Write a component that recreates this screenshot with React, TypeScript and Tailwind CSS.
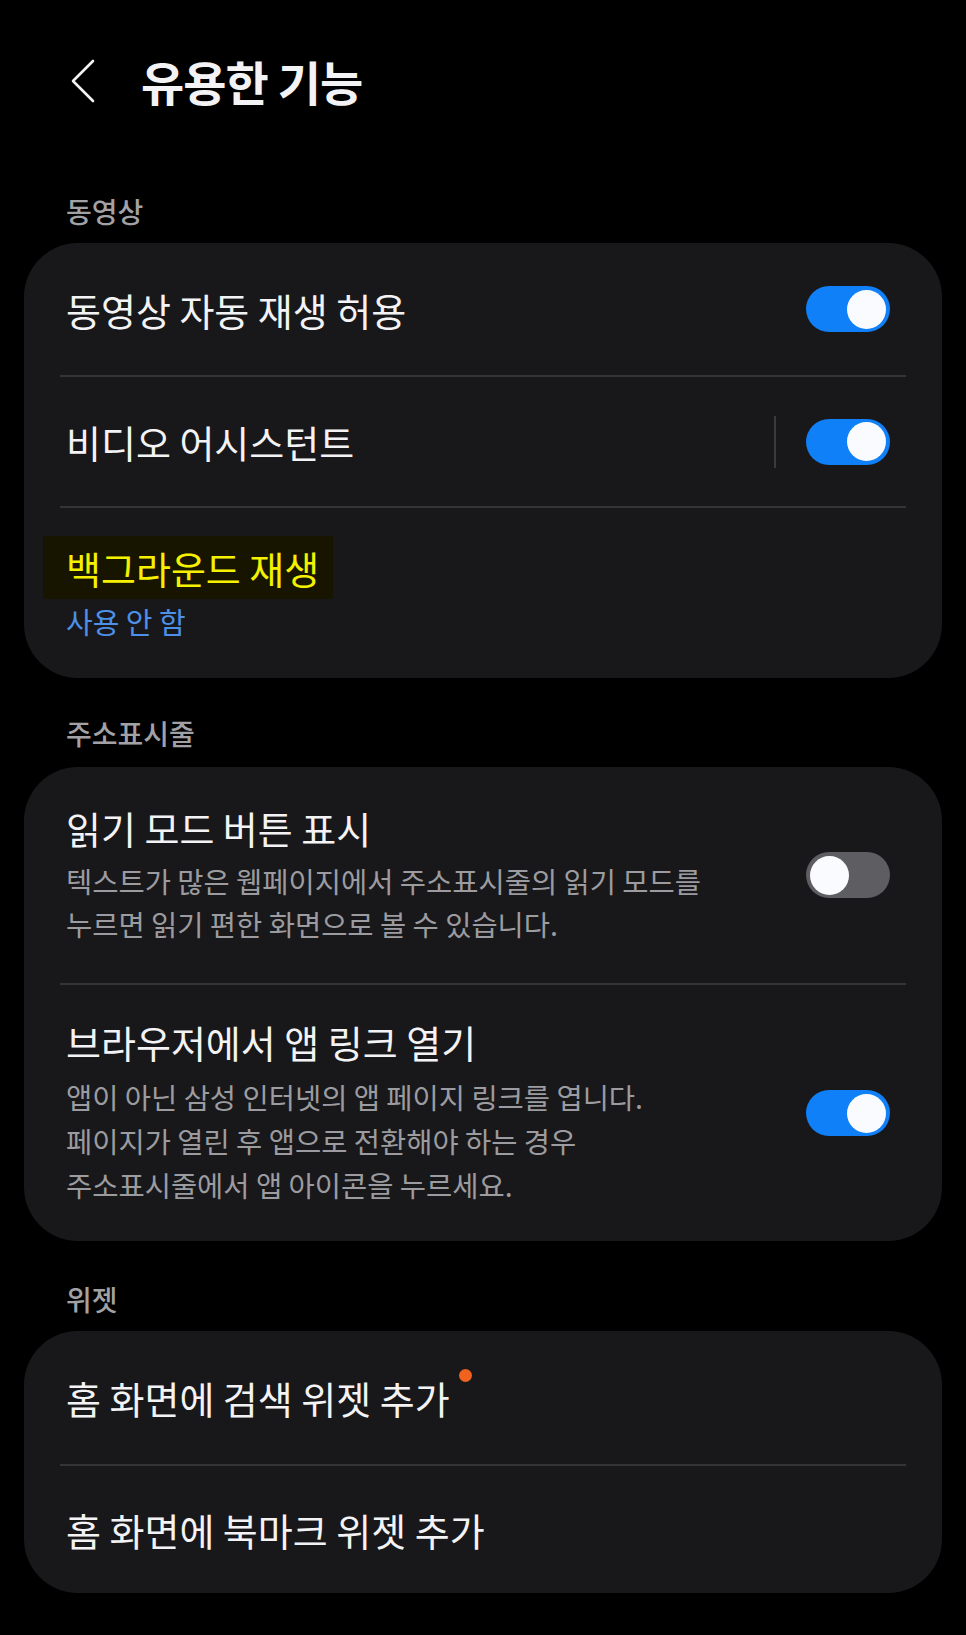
import type { ReactNode } from "react";

const font = { fontFamily: '"Noto Sans CJK KR", "Noto Sans", sans-serif' };

function Toggle({ on }: { on: boolean }) {
  return (
    <div
      className={`flex h-[46px] w-[84px] shrink-0 items-center rounded-full px-[4px] ${
        on ? "justify-end bg-[#0f80f7]" : "justify-start bg-[#5e5e62]"
      }`}
    >
      <div className="h-[39px] w-[39px] rounded-full bg-[#fafbff]" />
    </div>
  );
}

function Divider() {
  return <div className="mx-[36px] h-[2px] bg-[#343437]" />;
}

function SectionLabel({ children }: { children: ReactNode }) {
  return (
    <div className="pl-[42px] text-[28px] font-medium leading-[36px] text-[#a2a2a6]">{children}</div>
  );
}

function Card({ children }: { children: ReactNode }) {
  return <div className="overflow-hidden rounded-[54px] bg-[#18181b]">{children}</div>;
}

export default function App() {
  return (
    <div className="min-h-[1635px] bg-black px-[24px] text-[#f3f3f5]" style={font}>
      {/* header */}
      <div className="flex h-[166px] items-center pb-[4px]">
        <svg width="30" height="46" viewBox="0 0 30 46" className="ml-[44px]" fill="none">
          <path d="M25 3 L5 23 L25 43" stroke="#f3f3f5" strokeWidth="2.6" strokeLinecap="round" strokeLinejoin="round" />
        </svg>
        <h1 className="ml-[43px] text-[47px] font-bold tracking-[-0.02em]">유용한 기능</h1>
      </div>

      {/* 동영상 */}
      <div className="flex h-[77px] items-center pt-[13px]">
        <SectionLabel>동영상</SectionLabel>
      </div>
      <Card>
        <div className="flex h-[132px] items-center justify-between pl-[42px] pr-[52px]">
          <span className="text-[38px]">동영상 자동 재생 허용</span>
          <Toggle on />
        </div>
        <Divider />
        <div className="flex h-[129px] items-center justify-between pl-[42px] pr-[52px]">
          <span className="text-[38px]">비디오 어시스턴트</span>
          <div className="flex items-center gap-[30px]">
            <div className="h-[52px] w-[2px] bg-[#3a3a3d]" />
            <Toggle on />
          </div>
        </div>
        <Divider />
        <div className="flex h-[170px] flex-col items-start pl-[19px] pt-[28px]">
          <div className="flex h-[63px] items-center bg-[#171500] pl-[23px] pr-[14px]">
            <span className="text-[38px] text-[#f4f000]">백그라운드 재생</span>
          </div>
          <span className="pl-[23px] text-[29px] leading-[44px] text-[#4d90e8]">사용 안 함</span>
        </div>
      </Card>

      {/* 주소표시줄 */}
      <div className="flex h-[89px] items-center pt-[20px]">
        <SectionLabel>주소표시줄</SectionLabel>
      </div>
      <Card>
        <div className="flex h-[216px] items-center justify-between pl-[42px] pr-[52px]">
          <div className="flex flex-col">
            <span className="text-[38px] leading-[46px]">읽기 모드 버튼 표시</span>
            <p className="mt-[8px] text-[28.5px] leading-[43px] text-[#9c9ca0]">
              텍스트가 많은 웹페이지에서 주소표시줄의 읽기 모드를
              <br />
              누르면 읽기 편한 화면으로 볼 수 있습니다.
            </p>
          </div>
          <Toggle on={false} />
        </div>
        <Divider />
        <div className="flex h-[256px] items-center justify-between pl-[42px] pr-[52px]">
          <div className="flex flex-col">
            <span className="text-[38px] leading-[46px]">브라우저에서 앱 링크 열기</span>
            <p className="mt-[10px] text-[28.5px] leading-[44px] text-[#9c9ca0]">
              앱이 아닌 삼성 인터넷의 앱 페이지 링크를 엽니다.
              <br />
              페이지가 열린 후 앱으로 전환해야 하는 경우
              <br />
              주소표시줄에서 앱 아이콘을 누르세요.
            </p>
          </div>
          <Toggle on />
        </div>
      </Card>

      {/* 위젯 */}
      <div className="flex h-[90px] items-center pt-[26px]">
        <SectionLabel>위젯</SectionLabel>
      </div>
      <Card>
        <div className="flex h-[133px] items-center pl-[42px]">
          <span className="relative text-[38px]">
            홈 화면에 검색 위젯 추가
            <span className="absolute -right-[22px] top-[0px] h-[13px] w-[13px] rounded-full bg-[#f0621e]" />
          </span>
        </div>
        <Divider />
        <div className="flex h-[127px] items-center pl-[42px]">
          <span className="text-[38px]">홈 화면에 북마크 위젯 추가</span>
        </div>
      </Card>
    </div>
  );
}
